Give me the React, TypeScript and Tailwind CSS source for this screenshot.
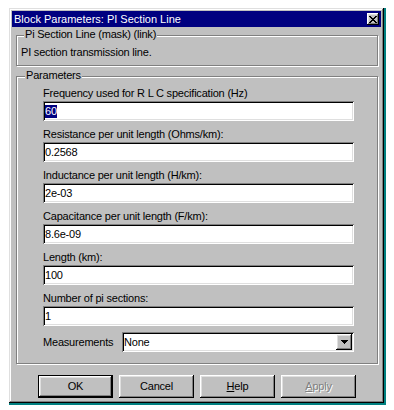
import React from "react";

const raised =
  "shadow-[inset_-1px_-1px_0_#000,inset_1px_1px_0_#fff,inset_-2px_-2px_0_#808080,inset_2px_2px_0_#dfdfdf]";
const sunken =
  "shadow-[inset_1px_1px_0_#808080,inset_-1px_-1px_0_#fff,inset_2px_2px_0_#000,inset_-2px_-2px_0_#dfdfdf]";
const etched = "border border-[#808080] shadow-[inset_1px_1px_0_#fff,1px_1px_0_#fff]";

function CloseGlyph() {
  const rows = [
    "XX....XX",
    ".XX..XX.",
    "..XXXX..",
    "...XX...",
    "..XXXX..",
    ".XX..XX.",
    "XX....XX",
  ];
  return (
    <svg width="8" height="7" viewBox="0 0 8 7" shapeRendering="crispEdges">
      {rows.map((r, y) =>
        r.split("").map((c, x) =>
          c === "X" ? <rect key={`${x}-${y}`} x={x} y={y} width="1" height="1" fill="#000" /> : null
        )
      )}
    </svg>
  );
}

function DownGlyph() {
  return (
    <svg width="7" height="4" viewBox="0 0 7 4" shapeRendering="crispEdges">
      <rect x="0" y="0" width="7" height="1" fill="#000" />
      <rect x="1" y="1" width="5" height="1" fill="#000" />
      <rect x="2" y="2" width="3" height="1" fill="#000" />
      <rect x="3" y="3" width="1" height="1" fill="#000" />
    </svg>
  );
}

const fields: [string, string][] = [
  ["Frequency used for R L C specification (Hz)", "60"],
  ["Resistance per unit length (Ohms/km):", "0.2568"],
  ["Inductance per unit length (H/km):", "2e-03"],
  ["Capacitance per unit length (F/km):", "8.6e-09"],
  ["Length (km):", "100"],
  ["Number of pi sections:", "1"],
];

export default function App() {
  return (
    <div className="w-[394px] h-[410px] bg-white pl-[9px] pt-[8px] font-['Liberation_Sans',Arial,sans-serif] text-[11px] text-black">
      <div className="w-[377px] h-[397px] bg-[#008080] pr-[2px] pb-[2px]">
        <div className="w-[375px] h-[395px] bg-[#c0c0c0] p-[3px] flex flex-col shadow-[inset_-1px_-1px_0_#000,inset_1px_1px_0_#dfdfdf,inset_-2px_-2px_0_#808080,inset_2px_2px_0_#fff]">
          {/* Title bar */}
          <div className="h-[16px] bg-[#000080] flex items-center justify-between pl-[2px] pr-[2px]">
            <span className="text-white leading-[13px]">Block Parameters: PI Section Line</span>
            <div className={`w-[12px] h-[12px] bg-[#c0c0c0] flex items-center justify-center ${raised}`}>
              <CloseGlyph />
            </div>
          </div>

          <div className="flex flex-col tracking-[-0.2px]">
            {/* Group 1 */}
            <div className={`relative mt-[8px] ml-[4px] w-[362px] h-[31px] ${etched}`}>
              <span className="absolute left-[7px] top-[-8px] px-[1px] leading-[13px] bg-[#c0c0c0] whitespace-nowrap">
                Pi Section Line (mask) (link)
              </span>
              <div className="pt-[10px] pl-[4px] leading-[13px]">PI section transmission line.</div>
            </div>

            {/* Group 2 */}
            <div className={`relative mt-[10px] ml-[4px] w-[362px] h-[288px] ${etched}`}>
              <span className="absolute left-[8px] top-[-8px] px-[1px] leading-[13px] bg-[#c0c0c0] whitespace-nowrap">
                Parameters
              </span>
              <div className="pt-[10px] pl-[26px] flex flex-col">
                <div className="flex flex-col gap-[7px]">
                  {fields.map(([label, value], i) => (
                    <div key={label} className="flex flex-col">
                      <div className="h-[14px] leading-[13px] whitespace-nowrap">{label}</div>
                      <div className={`w-[311px] h-[20px] bg-white flex items-center pl-[2px] leading-[13px] ${sunken}`}>
                        {i === 0 ? <span className="bg-[#000080] text-white">{value}</span> : value}
                      </div>
                    </div>
                  ))}
                </div>
                <div className="mt-[6px] flex items-center">
                  <div className="w-[79px] leading-[13px]">Measurements</div>
                  <div className={`w-[232px] h-[20px] bg-white flex items-center justify-between pl-[2px] pr-[2px] leading-[13px] ${sunken}`}>
                    <span>None</span>
                    <div className={`w-[16px] h-[16px] bg-[#c0c0c0] flex items-center justify-center ${raised}`}>
                      <DownGlyph />
                    </div>
                  </div>
                </div>
              </div>
            </div>

            {/* Buttons */}
            <div className="mt-[11px] ml-[26px] flex gap-[6px]">
              <div className={`w-[75px] h-[23px] border border-black flex items-center justify-center ${raised}`}>OK</div>
              <div className={`w-[75px] h-[23px] flex items-center justify-center ${raised}`}>Cancel</div>
              <div className={`w-[75px] h-[23px] flex items-center justify-center ${raised}`}>
                <span>
                  <span className="underline">H</span>elp
                </span>
              </div>
              <div className={`w-[75px] h-[23px] flex items-center justify-center text-[#808080] [text-shadow:1px_1px_0_#fff] ${raised}`}>
                <span>
                  <span className="underline">A</span>pply
                </span>
              </div>
            </div>
          </div>
        </div>
      </div>
    </div>
  );
}
